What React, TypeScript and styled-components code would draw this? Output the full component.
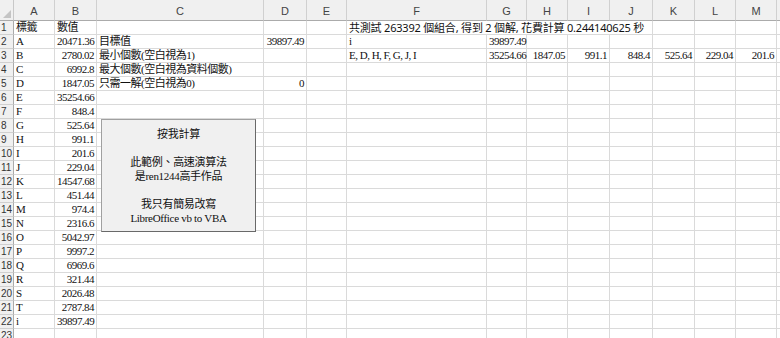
import React from 'react';
import styled, { createGlobalStyle } from 'styled-components';

const GlobalStyle = createGlobalStyle`
  html, body {
    margin: 0;
    padding: 0;
    background: #ffffff;
    overflow: hidden;
  }
`;

// last column is only a sliver at the right edge, so its letter is left out
const colWidths = [41, 42, 167, 43, 40, 140, 40, 41, 42, 43, 42, 41, 41, 40];
const colNames = ['A', 'B', 'C', 'D', 'E', 'F', 'G', 'H', 'I', 'J', 'K', 'L', 'M', ''];

type CellData = { text: string; align?: 'left' | 'right'; span?: number; sans?: boolean };

const labels = 'ABCDEFGHIJKLMNOPQRST'.split('').concat(['i']);
const values = [
  '20471.36', '2780.02', '6992.8', '1847.05', '35254.66', '848.4', '525.64', '991.1',
  '201.6', '229.04', '14547.68', '451.44', '974.4', '2316.6', '5042.97', '9997.2',
  '6969.6', '321.44', '2026.48', '2787.84', '39897.49',
];

const buildRows = (): Record<number, CellData>[] => {
  const rows: Record<number, CellData>[] = [];
  for (let r = 0; r < 23; r++) rows.push({});

  rows[0][0] = { text: '標籤' };
  rows[0][1] = { text: '數值' };
  rows[0][5] = { text: '共測試 263392 個組合, 得到 2 個解, 花費計算 0.244140625 秒', span: 5, sans: true };

  labels.forEach((l, i) => {
    rows[i + 1][0] = { text: l };
    rows[i + 1][1] = { text: values[i], align: 'right' };
  });

  rows[1][2] = { text: '目標值' };
  rows[1][3] = { text: '39897.49', align: 'right' };
  rows[1][5] = { text: 'i' };
  rows[1][6] = { text: '39897.49', align: 'right' };

  rows[2][2] = { text: '最小個數(空白視為1)' };
  rows[2][5] = { text: 'E, D, H, F, G, J, I' };
  ['35254.66', '1847.05', '991.1', '848.4', '525.64', '229.04', '201.6'].forEach((v, i) => {
    rows[2][6 + i] = { text: v, align: 'right' };
  });

  rows[3][2] = { text: '最大個數(空白視為資料個數)' };
  rows[4][2] = { text: '只需一解(空白視為0)' };
  rows[4][3] = { text: '0', align: 'right' };

  return rows;
};

const App: React.FC = () => {
  const rows = buildRows();

  return (
    <>
      <GlobalStyle />
      <Window>
        <Sheet $cols={colWidths}>
          <Corner>
            <svg width="8" height="8" viewBox="0 0 8 8">
              <polygon points="8,0 8,8 0,8" fill="#c4c4c4" />
            </svg>
          </Corner>
          {colNames.map((c, i) => (
            <ColHeader key={i}>{c}</ColHeader>
          ))}

          {rows.map((row, r) => {
            const cells: React.ReactNode[] = [];
            let c = 0;
            while (c < colNames.length) {
              const d = row[c];
              const span = d?.span ?? 1;
              cells.push(
                <Cell key={c} $align={d?.align ?? 'left'} $span={span} $sans={!!d?.sans}>
                  {d?.text}
                </Cell>
              );
              c += span;
            }
            return (
              <React.Fragment key={r}>
                <RowHeader>{r + 1}</RowHeader>
                {cells}
              </React.Fragment>
            );
          })}
        </Sheet>

        <MacroButton>
          <ButtonLine>按我計算</ButtonLine>
          <ButtonLine />
          <ButtonLine>此範例、高速演算法</ButtonLine>
          <ButtonLine>是ren1244高手作品</ButtonLine>
          <ButtonLine />
          <ButtonLine>我只有簡易改寫</ButtonLine>
          <ButtonLine>LibreOffice vb to VBA</ButtonLine>
        </MacroButton>
      </Window>
    </>
  );
};

export default App;

const Window = styled.div`
  position: relative;
  width: 780px;
  height: 338px;
  overflow: hidden;
  background: #ffffff;
`;

const Sheet = styled.div<{ $cols: number[] }>`
  display: grid;
  grid-template-columns: 14px ${(p) => p.$cols.map((w) => `${w}px`).join(' ')};
  grid-template-rows: 21px;
  grid-auto-rows: 14px;
`;

const Corner = styled.div`
  box-sizing: border-box;
  background: #f0f0f0;
  border-right: 1px solid #c8c8c8;
  border-bottom: 1px solid #ababab;
  display: flex;
  align-items: flex-end;
  justify-content: flex-end;
  padding: 0 2px 2px 0;
`;

const ColHeader = styled.div`
  box-sizing: border-box;
  background: #f0f0f0;
  border-right: 1px solid #d0d0d0;
  border-bottom: 1px solid #ababab;
  display: flex;
  align-items: center;
  justify-content: center;
  font-family: 'Liberation Sans', 'Noto Sans', sans-serif;
  font-size: 11px;
  color: #444444;
  padding-top: 1px;
`;

const RowHeader = styled.div`
  box-sizing: border-box;
  background: #f0f0f0;
  border-right: 1px solid #ababab;
  border-bottom: 1px solid #d0d0d0;
  font-family: 'Liberation Sans', 'Noto Sans', sans-serif;
  font-size: 10px;
  line-height: 13px;
  color: #333333;
  padding-left: 1px;
  white-space: nowrap;
  overflow: hidden;
`;

const Cell = styled.div<{ $align: 'left' | 'right'; $span: number; $sans: boolean }>`
  box-sizing: border-box;
  grid-column: span ${(p) => p.$span};
  border-right: 1px solid #dadada;
  border-bottom: 1px solid #dadada;
  font-family: ${(p) =>
    p.$sans
      ? "'Noto Sans', 'Noto Sans CJK TC', sans-serif"
      : "'Liberation Serif', 'Noto Sans CJK TC', serif"};
  font-size: 11px;
  line-height: 13px;
  letter-spacing: ${(p) => (p.$sans ? '-0.2px' : '-0.5px')};
  color: #111111;
  text-align: ${(p) => p.$align};
  padding: 0 2px;
  white-space: nowrap;
  overflow: visible;
`;

const MacroButton = styled.div`
  position: absolute;
  left: 101px;
  top: 119px;
  width: 155px;
  height: 113px;
  box-sizing: border-box;
  background: #f0f0f0;
  border: 1px solid #a0a0a0;
  border-right-color: #696969;
  border-bottom-color: #696969;
  padding-top: 7px;
  display: flex;
  flex-direction: column;
  align-items: center;
`;

const ButtonLine = styled.div`
  height: 14px;
  line-height: 14px;
  font-family: 'Liberation Serif', 'Noto Sans CJK TC', serif;
  font-size: 11px;
  letter-spacing: -0.3px;
  color: #111111;
  white-space: nowrap;
`;
